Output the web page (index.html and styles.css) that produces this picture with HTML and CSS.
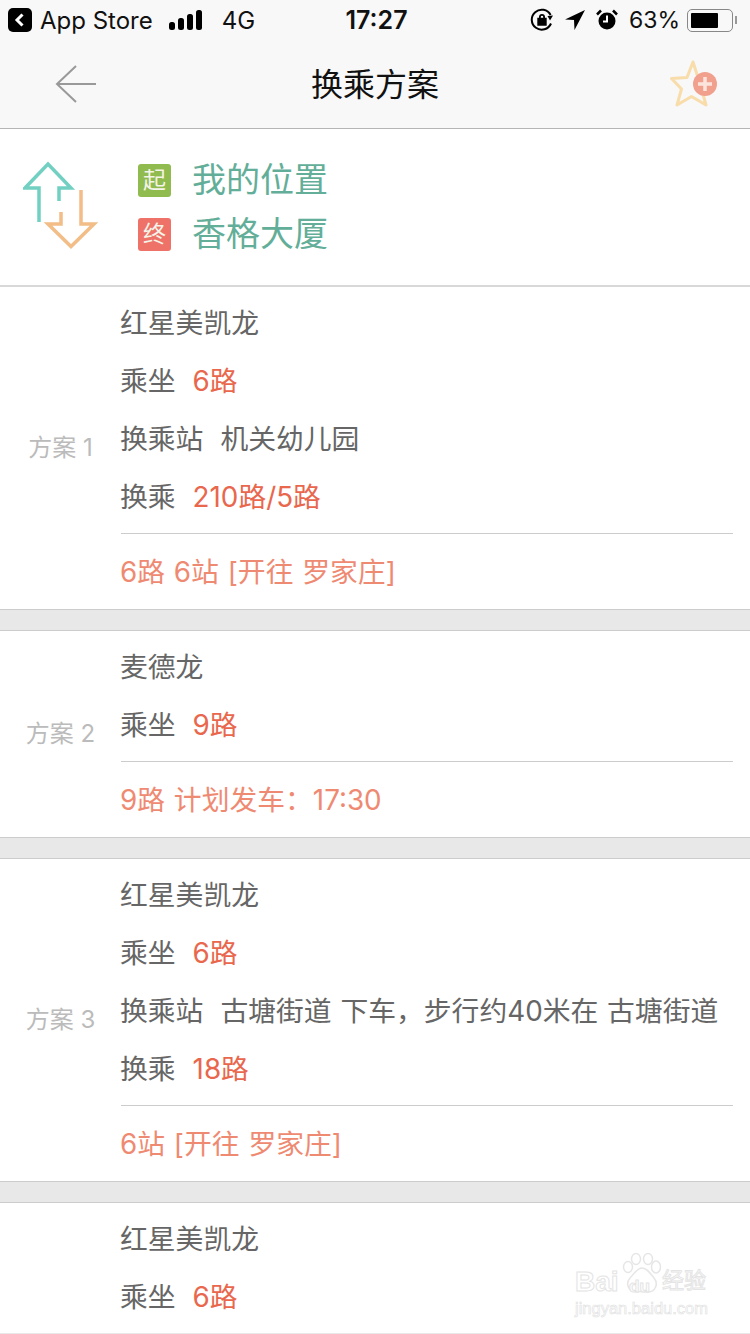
FILE: index.html
```html
<!DOCTYPE html>
<html lang="zh-CN">

<head>
    <meta charset="UTF-8">
    <meta name="viewport" content="width=device-width, initial-scale=1.0">
    <title>换乘方案</title>
    <link rel="stylesheet" href="styles.css">
</head>

<body>
    <div class="status-bar">
        <div class="status-left">
            <svg class="back-app" width="24" height="24" viewBox="0 0 24 24">
                <rect width="24" height="24" rx="5" fill="#000" />
                <path d="M14.5 6.5 9 12l5.5 5.5" fill="none" stroke="#fff" stroke-width="3" />
            </svg>
            <span>App Store</span>
            <svg class="signal" width="34" height="20" viewBox="0 0 34 20">
                <rect x="0" y="12" width="6" height="8" rx="2.5" />
                <rect x="9" y="8" width="6" height="12" rx="2.5" />
                <rect x="18" y="4" width="6" height="16" rx="2.5" />
                <rect x="27" y="0" width="6" height="20" rx="2.5" />
            </svg>
            <span>4G</span>
        </div>
        <div class="status-time">17:27</div>
        <div class="status-right">
            <svg width="24" height="24" viewBox="0 0 24 24">
                <path d="M21 15.5A10 10 0 1 1 20.6 7" fill="none" stroke="#000" stroke-width="2" />
                <path d="M17.5 8 23 7.5 20 12.5z" />
                <path d="M8 10.5h8V17H8zM9.7 10.5V9a2.3 2.3 0 0 1 4.6 0v1.5" fill="#000" stroke="#000" stroke-width="1.4" fill-rule="evenodd" />
                <path d="M10.8 9.8V9a1.2 1.2 0 0 1 2.4 0v.8z" fill="#fff" />
            </svg>
            <svg width="20" height="22" viewBox="0 0 20 22">
                <path d="M20 1 9.5 21 9 11 0 10.500z" />
            </svg>
            <svg width="22" height="22" viewBox="0 0 22 22">
                <circle cx="11" cy="12" r="8.500" />
                <path d="M11 6.500V12.500H7" fill="none" stroke="#fff" stroke-width="2" />
                <path d="M1 5.500 5 1.500M17 1.500l4 4" stroke="#000" stroke-width="2.500" />
            </svg>
            <span class="battery-text">63%</span>
            <div class="battery">
                <div class="battery-fill"></div>
            </div>
            <div class="battery-nub"></div>
        </div>
    </div>

    <div class="nav-bar">
        <svg class="nav-back" width="42" height="38" viewBox="0 0 42 38">
            <path d="M21 1 2 19l19 18M2 19h39" fill="none" stroke="#999" stroke-width="2" />
        </svg>
        <h1>换乘方案</h1>
        <svg class="nav-star" width="50" height="50" viewBox="0 0 50 50">
            <path d="M23 3 28 18.500 44 19.500 31.500 30 36 46 21.500 37.500 7 46 11.500 30 1.500 19.500 17 18.500z" fill="none" stroke="#f8dcaa" stroke-width="3" stroke-linejoin="round" />
            <circle cx="35" cy="25" r="12" fill="#f2a08e" />
            <path d="M35 18v14M28 25h14" stroke="#fbe4dc" stroke-width="3.500" />
        </svg>
    </div>

    <div class="route-head">
        <svg class="route-icon" width="76" height="90" viewBox="0 0 76 90">
            <path d="M16 61V27H2L25 3l23 24H36V40" fill="none" stroke="#72d0c2" stroke-width="3.500" />
            <path d="M58 29V63H71L48 85.500 25 63H38V51" fill="none" stroke="#f2bd86" stroke-width="3.500" />
        </svg>
        <div class="route-points">
            <div class="point"><span class="tag tag-start">起</span><span class="point-text">我的位置</span></div>
            <div class="point"><span class="tag tag-end">终</span><span class="point-text">香格大厦</span></div>
        </div>
    </div>

    <div class="plan">
        <div class="plan-name">方案 1</div>
        <div class="plan-body">
            <div class="rows">
                <div class="row">红星美凯龙</div>
                <div class="row">乘坐<span class="val red">6路</span></div>
                <div class="row">换乘站<span class="val">机关幼儿园</span></div>
                <div class="row">换乘<span class="val red">210路/5路</span></div>
            </div>
            <div class="plan-foot">6路 6站 [开往 罗家庄]</div>
        </div>
    </div>

    <div class="plan">
        <div class="plan-name">方案 2</div>
        <div class="plan-body">
            <div class="rows">
                <div class="row">麦德龙</div>
                <div class="row">乘坐<span class="val red">9路</span></div>
            </div>
            <div class="plan-foot">9路 计划发车：17:30</div>
        </div>
    </div>

    <div class="plan">
        <div class="plan-name">方案 3</div>
        <div class="plan-body">
            <div class="rows">
                <div class="row">红星美凯龙</div>
                <div class="row">乘坐<span class="val red">6路</span></div>
                <div class="row">换乘站<span class="val">古塘街道 下车，步行约40米在 古塘街道</span></div>
                <div class="row">换乘<span class="val red">18路</span></div>
            </div>
            <div class="plan-foot">6站 [开往 罗家庄]</div>
        </div>
    </div>

    <div class="plan plan-last">
        <div class="plan-name"></div>
        <div class="plan-body">
            <div class="rows">
                <div class="row">红星美凯龙</div>
                <div class="row">乘坐<span class="val red">6路</span></div>
            </div>
        </div>
    </div>

    <div class="watermark">
        <svg class="paw" width="40" height="41" viewBox="0 0 40 41">
            <g fill="#fff" stroke="#e6e6e6" stroke-width="1.500">
                <ellipse cx="6" cy="14" rx="4.500" ry="5.500" />
                <ellipse cx="14" cy="6" rx="4.500" ry="5.500" />
                <ellipse cx="26" cy="6" rx="4.500" ry="5.500" />
                <ellipse cx="34" cy="14" rx="4.500" ry="6" />
                <path d="M20 15c5 0 8 5 12 10 5 6 1 14-6 14-4 0-8-1-12 0-7 0-11-8-6-14 4-4 7-10 12-10z" />
            </g>
        </svg>
        <div class="wm-bai">Bai</div>
        <div class="wm-du">du</div>
        <div class="wm-cn">经验</div>
        <div class="wm-url">jingyan.baidu.com</div>
    </div>
</body>

</html>
```
FILE: styles.css
```css
html,
body {
    height: 1334px;
    overflow: hidden;
}

body {
    position: relative;
    margin: 0;
    background-color: #e8e8e8;
    font-family: Inter, "Noto Sans CJK SC", sans-serif;
    color: #666;
}

.status-bar {
    display: flex;
    align-items: center;
    justify-content: space-between;
    height: 40px;
    padding: 0 13px 0 8px;
    background-color: #f8f8f8;
    color: #111;
    font-size: 24px;
}

.status-left,
.status-right {
    display: flex;
    align-items: center;
    width: 300px;
}

.status-right {
    justify-content: flex-end;
    gap: 11px;
}

.back-app {
    margin-right: 8px;
}

.signal {
    margin: 0 19px 0 16px;
}

.status-time {
    margin-left: 8px;
    font-size: 25px;
    font-weight: 600;
}

.battery-text {
    margin-right: -4px;
    font-size: 23px;
}

.battery {
    width: 46px;
    height: 23px;
    box-sizing: border-box;
    padding: 3px;
    border: 1px solid #888;
    border-radius: 5px;
}

.battery-fill {
    width: 27px;
    height: 15px;
    background-color: #000;
    border-radius: 1px;
}

.battery-nub {
    width: 2px;
    height: 8px;
    margin-left: -9px;
    background-color: #999;
}

.nav-bar {
    display: grid;
    grid-template-columns: 1fr auto 1fr;
    align-items: center;
    height: 88px;
    padding: 0 30px 0 55px;
    background-color: #f8f8f8;
    border-bottom: 1px solid #b5b5b5;
}

.nav-bar h1 {
    margin: -4px 12.500px 0 -12.500px;
    font-size: 32px;
    font-weight: 400;
    color: #111;
}

.nav-star {
    justify-self: end;
}

.route-head {
    display: flex;
    align-items: center;
    height: 156px;
    background-color: #fff;
    border-bottom: 2px solid #d8d8d8;
}

.route-icon {
    margin: -3px 0 0 23px;
}

.route-points {
    display: flex;
    flex-direction: column;
    gap: 4px;
    margin-left: 39px;
}

.point {
    display: flex;
    align-items: center;
    height: 50px;
    font-size: 34px;
    color: #63ae98;
}

.point-text {
    margin-bottom: 6px;
}

.tag {
    width: 33px;
    height: 33px;
    margin-right: 21px;
    border-radius: 3px;
    color: #f4f4e8;
    font-size: 23px;
    line-height: 33px;
    text-align: center;
}

.tag-start {
    background-color: #90bb4e;
}

.tag-end {
    background-color: #ee7268;
}

.plan {
    display: flex;
    align-items: center;
    margin-bottom: 20px;
    background-color: #fff;
    border-bottom: 1px solid #ccc;
}

.plan + .plan {
    border-top: 1px solid #ccc;
}

.plan-last {
    align-items: flex-start;
    height: 130px;
    margin-bottom: 0;
    border-bottom: 0;
}

.plan-name {
    width: 121px;
    flex-shrink: 0;
    margin-bottom: 6px;
    text-align: center;
    font-size: 24px;
    color: #bbb;
}

.plan-body {
    flex: 1;
    padding-right: 17px;
}

.rows {
    padding: 7px 0;
    border-bottom: 1px solid #ccc;
}

.plan-last .rows {
    border-bottom: 0;
}

.row {
    height: 58px;
    line-height: 58px;
    font-size: 27.800px;
    text-indent: -1px;
    word-spacing: 1px;
    white-space: nowrap;
}

.val {
    margin-left: 17px;
}

.red {
    color: #e9674d;
}

.plan-foot {
    height: 75px;
    line-height: 77px;
    font-size: 27.800px;
    text-indent: -1px;
    word-spacing: 1px;
    color: #ef8a72;
    white-space: nowrap;
}

.watermark {
    position: absolute;
    left: 575px;
    top: 1253px;
    width: 135px;
    height: 66px;
    color: #fff;
}

.paw {
    position: absolute;
    left: 47px;
    top: 0;
}

.wm-bai,
.wm-du,
.wm-cn,
.wm-url {
    position: absolute;
    font-family: "Liberation Sans", "Noto Sans CJK SC", sans-serif;
    white-space: nowrap;
    -webkit-text-stroke: 1px #e4e4e4;
}

.wm-bai {
    left: 0;
    top: 14px;
    font-size: 28px;
    line-height: 30px;
    font-weight: 700;
}

.wm-du {
    left: 54px;
    top: 24px;
    font-size: 17px;
    line-height: 20px;
    font-weight: 700;
}

.wm-cn {
    left: 87px;
    top: 14px;
    font-size: 22px;
    line-height: 28px;
}

.wm-url {
    left: 0;
    top: 46px;
    font-size: 16.500px;
    line-height: 18px;
    -webkit-text-stroke: 0.6px #e0e0e0;
}
```
